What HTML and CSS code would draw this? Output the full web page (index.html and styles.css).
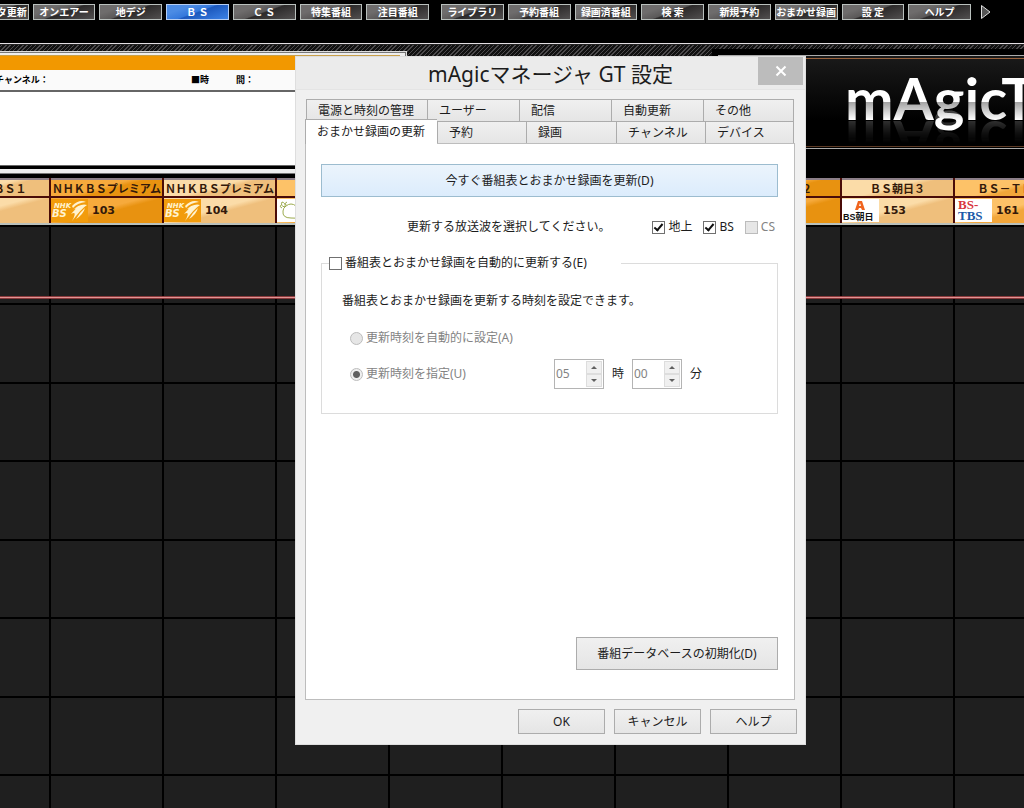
FILE: index.html
```html
<!DOCTYPE html>
<html lang="ja">
<head>
<meta charset="utf-8">
<title>mAgicTV</title>
<link rel="stylesheet" href="styles.css">
</head>
<body>
<div class="app">
  <nav class="toolbar">
    <div class="group group-source">
      <button class="tool tool-cut">データ更新</button>
      <button class="tool">オンエアー</button>
      <button class="tool">地デジ</button>
      <button class="tool tool-active">Ｂ Ｓ</button>
      <button class="tool">Ｃ Ｓ</button>
      <button class="tool">特集番組</button>
      <button class="tool">注目番組</button>
    </div>
    <div class="group group-menu">
      <button class="tool">ライブラリ</button>
      <button class="tool">予約番組</button>
      <button class="tool">録画済番組</button>
      <button class="tool">検 索</button>
      <button class="tool">新規予約</button>
      <button class="tool">おまかせ録画</button>
      <button class="tool">設 定</button>
      <button class="tool">ヘルプ</button>
    </div>
    <button class="more" aria-label="次へ">
      <svg width="12" height="16" viewBox="0 0 12 16"><path d="M1.500 1.500v13L10 8z" fill="#555" stroke="#ddd"/></svg>
    </button>
  </nav>

  <section class="hero">
    <div class="info">
      <div class="info-inner">
        <div class="info-bar"></div>
        <div class="info-head">
          <span class="info-channel">チャンネル：</span>
          <span class="info-time">■時　　　間：</span>
        </div>
        <div class="info-body"></div>
      </div>
    </div>
    <div class="brand">
      <div class="banner"><span class="logo">mAgicTV</span></div>
    </div>
  </section>

  <table class="channels">
    <tr class="names">
      <th class="light">ＮＨＫＢＳ１</th>
      <th class="deep">ＮＨＫＢＳプレミアム</th>
      <th class="light">ＮＨＫＢＳプレミアム</th>
      <th class="mid"></th>
      <th class="light"></th>
      <th class="deep"></th>
      <th class="light"></th>
      <th class="deep">ＢＳ朝日２</th>
      <th class="light">ＢＳ朝日３</th>
      <th class="mid">ＢＳ－ＴＢＳ</th>
    </tr>
    <tr class="numbers">
      <td class="light"></td>
      <td class="deep"><div class="ch">
        <svg width="37" height="23" viewBox="0 0 37 23"><rect width="37" height="23" fill="#f29c0c"/><text class="nhk" x="3" y="9" font-size="7">NHK</text><text class="nhk" x="1" y="18" font-size="10">BS</text><path d="M21 7Q28 0 35 3Q26 4 22 9zM21 12Q29 4 36 6Q31 9 21 22Q27 11 20 15Q29 6 21 12zM25 20Q29 13 34 9Q32 16 25 20z" fill="#fff3d0"/></svg>103</div></td>
      <td class="light"><div class="ch">
        <svg width="37" height="23" viewBox="0 0 37 23"><rect width="37" height="23" fill="#f29c0c"/><text class="nhk" x="3" y="9" font-size="7">NHK</text><text class="nhk" x="1" y="18" font-size="10">BS</text><path d="M21 7Q28 0 35 3Q26 4 22 9zM21 12Q29 4 36 6Q31 9 21 22Q27 11 20 15Q29 6 21 12zM25 20Q29 13 34 9Q32 16 25 20z" fill="#fff3d0"/></svg>104</div></td>
      <td class="mid"><div class="ch">
        <svg width="37" height="23" viewBox="0 0 37 23"><rect width="37" height="23" fill="#fff"/><path d="M9 7Q14 3 19 7Q27 8 25 15Q23 20 14 19Q5 19 6 12Q6 9 9 7zM8 8Q3 7 5 3Q9 4 8 8M9 6Q7 4 10 3M5 9Q2 8 4 6" fill="none" stroke="#9cab4e"/></svg></div></td>
      <td class="light"></td>
      <td class="deep"></td>
      <td class="light"></td>
      <td class="deep"></td>
      <td class="light"><div class="ch">
        <svg width="37" height="23" viewBox="0 0 37 23"><rect width="37" height="23" fill="#fff"/><path fill-rule="evenodd" d="M13 11L16 2H20L23 11H20L19 9H17L16 11zM17 7H19L18 4z" fill="#f0641e"/><text class="asahi" x="1" y="21">BS朝日</text></svg>153</div></td>
      <td class="mid"><div class="ch">
        <svg width="37" height="23" viewBox="0 0 37 23"><rect width="37" height="23" fill="#fff"/><text class="tbs"><tspan class="tbs-red" x="3" y="10">BS-</tspan><tspan class="tbs-blue" x="3" y="21">TBS</tspan></text></svg>161</div></td>
    </tr>
  </table>

  <div class="guide"><div class="now"></div></div>
</div>

<div class="dialog" role="dialog" aria-labelledby="dlg-title">
  <header class="titlebar">
    <h1 class="title" id="dlg-title">mAgicマネージャ GT 設定</h1>
    <button class="close" aria-label="閉じる"><svg width="12" height="12" viewBox="0 0 12 12"><path d="M1.500 1.500l9 9M10.500 1.500l-9 9" stroke="#fff" stroke-width="2"/></svg></button>
  </header>
  <div class="dialog-main">
    <div class="tabs tabs-back">
      <button class="tab">電源と時刻の管理</button>
      <button class="tab">ユーザー</button>
      <button class="tab">配信</button>
      <button class="tab">自動更新</button>
      <button class="tab">その他</button>
    </div>
    <div class="tabs tabs-front">
      <button class="tab tab-active">おまかせ録画の更新</button>
      <button class="tab">予約</button>
      <button class="tab">録画</button>
      <button class="tab">チャンネル</button>
      <button class="tab">デバイス</button>
    </div>
    <div class="panel">
      <button class="btn btn-primary">今すぐ番組表とおまかせ録画を更新(D)</button>
      <div class="waves">
        <span class="waves-text">更新する放送波を選択してください。</span>
        <label class="option"><input class="check" type="checkbox" checked>地上</label>
        <label class="option"><input class="check" type="checkbox" checked>BS</label>
        <label class="option option-off"><input class="check" type="checkbox" disabled>CS</label>
      </div>
      <fieldset class="auto">
        <legend class="legend"><label class="option"><input class="check" type="checkbox">番組表とおまかせ録画を自動的に更新する(E)</label></legend>
        <p class="note">番組表とおまかせ録画を更新する時刻を設定できます。</p>
        <div class="choice">
          <label class="option option-off"><input class="radio" type="radio" name="when" disabled>更新時刻を自動的に設定(A)</label>
        </div>
        <div class="choice choice-time">
          <label class="option option-off"><input class="radio" type="radio" name="when" checked disabled>更新時刻を指定(U)</label>
          <div class="time">
            <span class="spin"><input class="spin-value" id="hour" type="text" value="05" disabled><span class="spin-keys"><button class="key key-up" aria-label="時を増やす" disabled></button><button class="key key-down" aria-label="時を減らす" disabled></button></span></span>
            <label for="hour">時</label>
            <span class="spin"><input class="spin-value" id="minute" type="text" value="00" disabled><span class="spin-keys"><button class="key key-up" aria-label="分を増やす" disabled></button><button class="key key-down" aria-label="分を減らす" disabled></button></span></span>
            <label for="minute">分</label>
          </div>
        </div>
      </fieldset>
      <button class="btn btn-reset">番組データベースの初期化(D)</button>
    </div>
    <footer class="actions">
      <button class="btn">OK</button>
      <button class="btn">キャンセル</button>
      <button class="btn">ヘルプ</button>
    </footer>
  </div>
</div>
</body>
</html>
```
FILE: styles.css
```css
*, *::before, *::after { box-sizing: border-box; }

body {
  margin: 0;
  background: #000;
  color: #1c1c1c;
  font: 12px/16px "Noto Sans", "Noto Sans CJK JP", sans-serif;
}

button, input { font: inherit; color: inherit; margin: 0; padding: 0; }

.app {
  display: flex;
  flex-direction: column;
  height: 100vh;
  overflow: hidden;
}

/* Toolbar */
.toolbar {
  display: flex;
  flex: none;
  align-items: flex-start;
  height: 44px;
  padding-top: 4px;
  border-bottom: 1px solid #e4e0e4;
}
.group { display: grid; grid-auto-flow: column; grid-auto-columns: 1fr; gap: 4px; flex: none; }
.group-source { width: 463px; margin-left: -34px; }
.group-menu { width: 530px; margin-left: 12px; }
.tool {
  height: 16px;
  border: 1px solid #b9c0bd;
  background: linear-gradient(160deg, #6e6c6c 0 25%, #5a5858 48%, #2c2a2a 52%, #514f4f 100%);
  color: #fff;
  font: bold 10px/14px "Noto Sans CJK JP", sans-serif;
  white-space: nowrap;
}
.tool-cut { text-align: right; padding-right: 1px; }
.tool-active {
  border-color: #b5cdf2;
  background: linear-gradient(160deg, #4b8be4 0 25%, #3478dc 48%, #1c58bd 52%, #3c82e6 100%);
}
.more { margin-left: 9px; border: 0; background: none; height: 16px; }
.more svg { display: block; }

/* Programme info and brand banner */
.hero {
  display: flex;
  flex: none;
  justify-content: space-between;
  height: 134px;
  background: repeating-linear-gradient(135deg, #111 0 1px, #4c4a4c 1px 2px, #111 2px 3px);
  border-top: 1px solid #222;
}
.info {
  flex: none;
  width: 407px;
  margin-top: 6px;
  border: solid #ddd;
  border-width: 1px 1px 0 0;
  background: #000;
}
.info-inner {
  height: 120px;
  margin: 1px 1px 0 0;
  border: solid #eee;
  border-width: 2px 5px 4px 0;
  outline: 1px solid #777;
}
.info-bar { height: 15px; background: #f29800; border-top: 1px solid #c9a04a; }
.info-head {
  display: flex;
  height: 20px;
  background: #fafafa;
  color: #000;
  font: bold 9px/19px "Noto Sans CJK JP", sans-serif;
}
.info-channel { flex: none; width: 196px; margin-left: -5px; }
.info-time { white-space: pre; }
.info-body { height: 76px; background: #fff; border: solid #666; border-width: 2px 0 1px; }
.brand { flex: none; width: 312px; margin-top: 4px; padding: 6px 0 0 6px; background: #000; }
.banner {
  height: 94px;
  overflow: hidden;
  border: solid #aaa;
  border-width: 1px 0 1px;
  background:
    linear-gradient(#9a623c, #9a623c) 0 2px / 100% 1px no-repeat,
    linear-gradient(#5c3a25, #5c3a25) 0 90px / 100% 1px no-repeat,
    linear-gradient(#1a1a1a, #000 70%);
}
.logo {
  display: block;
  width: max-content;
  margin: 6px 0 0 127px;
  background: linear-gradient(#fff 0 40px, #a2a2a2 40px, #fff 58px);
  background-clip: text;
  color: transparent;
  font: bold 58px/72px Lato, sans-serif;
  -webkit-box-reflect: below -27px linear-gradient(transparent 50%, rgba(255, 255, 255, .3));
}

/* Channel header */
.channels {
  flex: none;
  width: 1132px;
  margin-left: -64px;
  table-layout: fixed;
  border-collapse: collapse;
  border-top: 2px solid #8c7f88;
  border-bottom: 2px solid #b9c0bb;
  color: #33190a;
}
.channels th, .channels td {
  padding: 0;
  border: solid #4a0c08;
  border-width: 0 2px;
  overflow: hidden;
  white-space: nowrap;
}
.channels .names th {
  height: 18px;
  border-top: 2px solid #8c7f88;
  border-bottom: 2px solid #4a0c08;
  font: bold 11px/14px "Noto Sans CJK JP", sans-serif;
}
.channels .numbers td { height: 27px; border-bottom: 2px solid #b9c0bb; }
.light { background: linear-gradient(165deg, #fbdca8 45%, #efbf7c 55%); }
.deep { background: linear-gradient(165deg, #f6aa3c 45%, #e89210 55%); }
.mid { background: linear-gradient(165deg, #fdc268 45%, #f2a63a 55%); }
.ch {
  display: flex;
  align-items: center;
  gap: 4px;
  font: bold 11px/23px "DejaVu Sans", sans-serif;
}
.nhk { font-family: "DejaVu Sans", sans-serif; font-weight: bold; font-style: italic; fill: #fff3d0; }
.asahi { font: bold 9px "Liberation Sans", "Noto Sans CJK JP", sans-serif; fill: #111; }
.tbs { font: bold 13px "Liberation Serif", serif; }
.tbs-red { fill: #d9363e; }
.tbs-blue { fill: #1a5aa8; }

/* Programme grid */
.guide {
  position: relative;
  flex: 1;
  border-top: 2px solid #000;
  background:
    repeating-linear-gradient(transparent 0 76px, #000 76px 78px, transparent 78px 155px, #000 155px 157px),
    linear-gradient(90deg, #000 2px, transparent 2px) 49px 0 / 113px 100%,
    #1f1f1f;
}
.now {
  position: absolute;
  left: 0;
  right: 0;
  top: 69px;
  height: 3px;
  border: solid #8a3a3c;
  border-width: 1px 0;
  background: #e29494;
}

/* Settings dialog */
.dialog {
  position: absolute;
  left: 295px;
  top: 56px;
  width: 511px;
  border: 1px solid #dedede;
  background: #f0f0f0;
}
.titlebar {
  position: relative;
  height: 33px;
  background: #ebebeb;
  border-bottom: 1px solid #e4e4e4;
}
.title {
  margin: 0;
  font-size: 21px;
  font-weight: normal;
  line-height: 34px;
  text-align: center;
}
.close {
  position: absolute;
  right: 2px;
  top: 0;
  width: 45px;
  height: 28px;
  border: 0;
  background: #bcbcbc;
}
.close svg { display: block; margin: auto; }
.dialog-main { padding: 9px 10px 10px 9px; }

.tabs { display: grid; }
.tabs-back { grid-template-columns: 121fr 92fr 92fr 92fr 91fr; margin: 0 1px; }
.tabs-front { grid-template-columns: 132fr 89fr 90fr 89fr 89fr; margin-right: 1px; }
.tab {
  height: 22px;
  padding-left: 11px;
  border: solid #acacac;
  border-width: 1px 0 0 1px;
  background: linear-gradient(#f0f0f0, #e5e5e5);
  line-height: 20px;
  text-align: left;
  white-space: nowrap;
}
.tab:last-child { border-right-width: 1px; }
.tab-active { position: relative; height: 25px; margin: -2px 0 -1px; background: #fff; }

.panel {
  display: flex;
  flex-direction: column;
  min-height: 557px;
  padding: 20px 16px 29px 15px;
  border: 1px solid #bdbdbd;
  background: #fff;
}
.btn {
  height: 25px;
  border: 1px solid #acacac;
  background: linear-gradient(#f0f0f0, #e5e5e5);
}
.btn-primary { height: 33px; border-color: #9cbccf; background: linear-gradient(#ebf4fc, #dcecfc); }
.btn-reset { width: 202px; height: 33px; margin-top: auto; align-self: flex-end; }

.waves { display: flex; justify-content: flex-end; align-items: center; gap: 11px; margin: 22px 3px 0 0; }
.waves-text { margin-right: 31px; }
.option { display: flex; align-items: center; gap: 3px; }
.option-off { color: #838383; }

.check, .radio { appearance: none; flex: none; width: 13px; height: 13px; border: 1px solid #707070; background: #fff; }
.check:checked { position: relative; }
.check:checked::after {
  content: "";
  position: absolute;
  left: 3px;
  top: 0;
  width: 5px;
  height: 9px;
  border: solid #111;
  border-width: 0 2px 2px 0;
  transform: rotate(40deg);
}
.check:disabled, .radio:disabled { border-color: #bcbcbc; background: #e6e6e6; }
.radio { border-radius: 50%; }
.radio:checked:disabled { background: radial-gradient(circle, #606060 0 3px, #eee 4px); }

.auto {
  min-width: 0;
  height: 161px;
  margin: 18px 0 0;
  padding: 0 20px;
  border: 1px solid #dcdcdc;
}
.legend { width: 292px; margin-left: -13px; padding: 0; line-height: 20px; }
.note { margin: 20px 0 0; }
.choice { margin: 21px 0 0 8px; }
.choice-time { display: flex; align-items: center; justify-content: space-between; height: 30px; margin-top: 13px; }
.time { display: flex; align-items: center; gap: 8px; margin-right: 55px; }
.spin { display: flex; width: 50px; height: 30px; padding: 1px; border: 1px solid #b4b4b4; background: #fff; }
.spin-value { flex: 1; min-width: 0; border: 0; background: none; color: #838383; }
.spin-keys { display: grid; width: 16px; }
.key { display: grid; place-items: center; border: 1px solid #ddd; background: #f0f0f0; }
.key::before { content: ""; border: solid transparent; border-width: 0 3px; }
.key-up::before { border-bottom: 3px solid #606060; }
.key-down::before { border-top: 3px solid #606060; }

.actions { display: grid; grid-template-columns: repeat(3, 87px); justify-content: end; gap: 9px; margin: 9px -2px 0 0; }
```
